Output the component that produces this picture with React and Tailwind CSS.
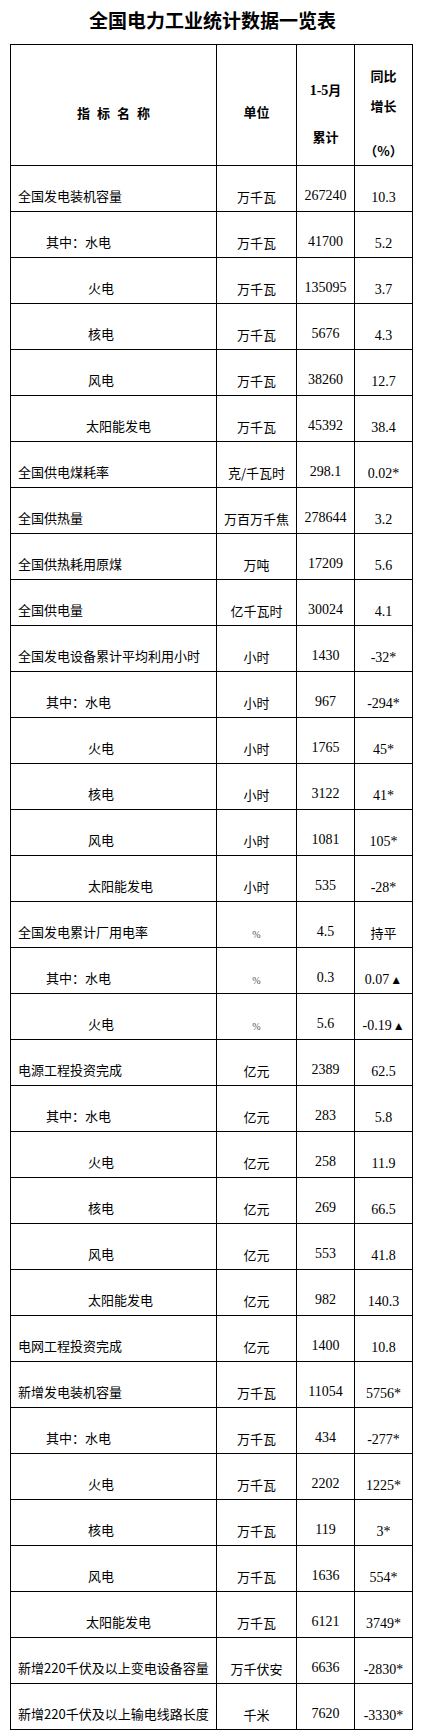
import React from "react";

const rows = [
  ["全国发电装机容量", 0, "万千瓦", "267240", "10.3"],
  ["其中：水电", 1, "万千瓦", "41700", "5.2"],
  ["火电", 2, "万千瓦", "135095", "3.7"],
  ["核电", 2, "万千瓦", "5676", "4.3"],
  ["风电", 2, "万千瓦", "38260", "12.7"],
  ["太阳能发电", 3, "万千瓦", "45392", "38.4"],
  ["全国供电煤耗率", 0, "克/千瓦时", "298.1", "0.02*"],
  ["全国供热量", 0, "万百万千焦", "278644", "3.2"],
  ["全国供热耗用原煤", 0, "万吨", "17209", "5.6"],
  ["全国供电量", 0, "亿千瓦时", "30024", "4.1"],
  ["全国发电设备累计平均利用小时", 0, "小时", "1430", "-32*"],
  ["其中：水电", 1, "小时", "967", "-294*"],
  ["火电", 2, "小时", "1765", "45*"],
  ["核电", 2, "小时", "3122", "41*"],
  ["风电", 2, "小时", "1081", "105*"],
  ["太阳能发电", 2, "小时", "535", "-28*"],
  ["全国发电累计厂用电率", 0, "%", "4.5", "持平"],
  ["其中：水电", 1, "%", "0.3", "0.07▲"],
  ["火电", 2, "%", "5.6", "-0.19▲"],
  ["电源工程投资完成", 0, "亿元", "2389", "62.5"],
  ["其中：水电", 1, "亿元", "283", "5.8"],
  ["火电", 2, "亿元", "258", "11.9"],
  ["核电", 2, "亿元", "269", "66.5"],
  ["风电", 2, "亿元", "553", "41.8"],
  ["太阳能发电", 2, "亿元", "982", "140.3"],
  ["电网工程投资完成", 0, "亿元", "1400", "10.8"],
  ["新增发电装机容量", 0, "万千瓦", "11054", "5756*"],
  ["其中：水电", 1, "万千瓦", "434", "-277*"],
  ["火电", 2, "万千瓦", "2202", "1225*"],
  ["核电", 2, "万千瓦", "119", "3*"],
  ["风电", 2, "万千瓦", "1636", "554*"],
  ["太阳能发电", 3, "万千瓦", "6121", "3749*"],
  ["新增220千伏及以上变电设备容量", 0, "万千伏安", "6636", "-2830*"],
  ["新增220千伏及以上输电线路长度", 0, "千米", "7620", "-3330*"],
];

const indent = ["pl-[7px]", "pl-[35px]", "pl-[77px]", "pl-[75px]"];
const cjk = "font-['Noto_Sans_CJK_SC',sans-serif]";
const serif = "font-['Liberation_Serif','Noto_Sans_CJK_SC',serif]";
const cell = "border-r border-b border-black";

function Yoy({ value }) {
  if (value === "持平") return <span className={`${cjk} text-[13px]`}>{value}</span>;
  if (value.endsWith("▲")) {
    return (
      <span className={`${serif} text-[14px]`}>
        {value.slice(0, -1)}
        <span className="text-[12px] ml-[1px]">▲</span>
      </span>
    );
  }
  return <span className={`${serif} text-[14px]`}>{value}</span>;
}

export default function App() {
  return (
    <div className="bg-white w-[425px] min-h-[1736px] text-black">
      {/* TITLE */}
      <div className={`h-[44px] pt-[8px] text-center text-[19px] leading-[24px] font-bold ${cjk}`}>
        全国电力工业统计数据一览表
      </div>

      {/* TABLE */}
      <div className="ml-[10px] w-[403px] border-t border-l border-black">
        {/* HEADER */}
        <div className={`grid grid-cols-[206px_80px_58px_58px] h-[121px] font-bold text-[13px] leading-[18px] ${cjk}`}>
          <div className={`${cell} pt-[59px] flex justify-center gap-[7px]`}>
            {"指标名称".split("").map((c) => (
              <span key={c}>{c}</span>
            ))}
          </div>
          <div className={`${cell} pt-[58px] text-center`}>单位</div>
          <div className={`${cell} pt-[36px] flex flex-col items-center`}>
            <span>
              <span className={`${serif} text-[14px]`}>1-5</span>月
            </span>
            <span className="mt-[28px]">累计</span>
          </div>
          <div className={`${cell} pt-[22px] flex flex-col items-center`}>
            <span>同比</span>
            <span className="mt-[12px]">增长</span>
            <span className="mt-[27px]">（%）</span>
          </div>
        </div>

        {/* ROWS */}
        {rows.map(([name, level, unit, total, yoy], i) => (
          <div
            key={i}
            className="grid grid-cols-[206px_80px_58px_58px] h-[46px] leading-[18px]"
          >
            <div className={`${cell} pt-[21px] ${indent[level]} ${cjk} text-[13px] whitespace-nowrap`}>
              {name}
            </div>
            <div className={`${cell} pt-[21px] text-center`}>
              {unit === "%" ? (
                <span className={`${serif} text-[10px] text-gray-600`}>%</span>
              ) : (
                <span className={`${cjk} text-[13px]`}>{unit}</span>
              )}
            </div>
            <div className={`${cell} pt-[21px] text-center ${serif} text-[14px]`}>
              {total}
            </div>
            <div className={`${cell} pt-[21px] text-center`}>
              <Yoy value={yoy} />
            </div>
          </div>
        ))}
      </div>
    </div>
  );
}
